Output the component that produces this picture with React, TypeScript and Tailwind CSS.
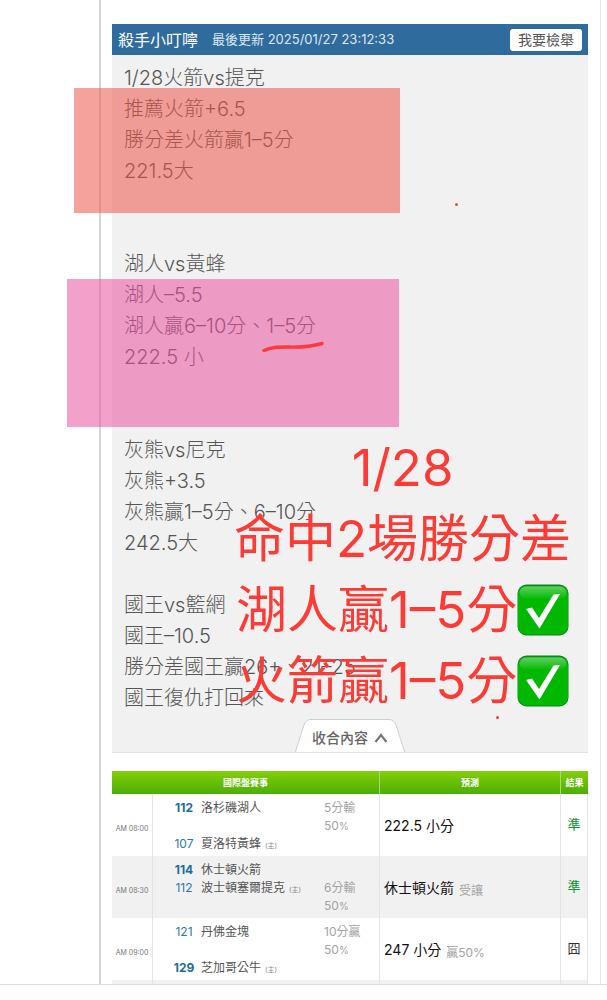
interface Team {
  number: string;
  name: string;
  home?: boolean;
  favored?: boolean;
}

interface Game {
  time: string;
  away: Team;
  host: Team;
  spread: string;
  // 讓分標示在客隊或主隊那一列
  spreadRow: 'away' | 'host';
  pick: string;
  pickNote?: string;
  result: string;
  hit: boolean;
}

const NOTE_LINES = [
  '1/28火箭vs提克',
  '推薦火箭+6.5',
  '勝分差火箭贏1–5分',
  '221.5大',
  '',
  '',
  '湖人vs黃蜂',
  '湖人–5.5',
  '湖人贏6–10分、1–5分',
  '222.5 小',
  '',
  '',
  '灰熊vs尼克',
  '灰熊+3.5',
  '灰熊贏1–5分、6–10分',
  '242.5大',
  '',
  '國王vs籃網',
  '國王–10.5',
  '勝分差國王贏26+、21–25',
  '國王復仇打回來',
];

const GAMES: Game[] = [
  {
    time: 'AM 08:00',
    away: { number: '112', name: '洛杉磯湖人', favored: true },
    host: { number: '107', name: '夏洛特黃蜂', home: true },
    spread: '5分輸',
    spreadRow: 'away',
    pick: '222.5 小分',
    result: '準',
    hit: true,
  },
  {
    time: 'AM 08:30',
    away: { number: '114', name: '休士頓火箭', favored: true },
    host: { number: '112', name: '波士頓塞爾提克', home: true },
    spread: '6分輸',
    spreadRow: 'host',
    pick: '休士頓火箭',
    pickNote: '受讓',
    result: '準',
    hit: true,
  },
  {
    time: 'AM 09:00',
    away: { number: '121', name: '丹佛金塊' },
    host: { number: '129', name: '芝加哥公牛', home: true, favored: true },
    spread: '10分贏',
    spreadRow: 'away',
    pick: '247 小分',
    pickNote: '贏50%',
    result: '囧',
    hit: false,
  },
];

function CheckMark() {
  return (
    <svg viewBox="0 0 52 52" className="h-[52px] w-[52px] shrink-0" role="img" aria-label="命中">
      <defs>
        <linearGradient id="check-shine" x1="0" y1="0" x2="0" y2="1">
          <stop offset="0" stopColor="#5fd05f" />
          <stop offset="1" stopColor="#00b800" />
        </linearGradient>
      </defs>
      <rect x="0.5" y="0.5" width="51" height="51" rx="9" fill="#078a18" />
      <rect x="1" y="2" width="50" height="48.5" rx="8.5" fill="#00b800" />
      <rect x="2.5" y="2.5" width="47" height="13" rx="6.5" fill="url(#check-shine)" />
      <path d="M9 25 L15 23.5 L22 34 L36.5 10.5 L43 10 L22.5 44.5 Z" fill="#fff" />
    </svg>
  );
}

function Spread({ text }: { text: string }) {
  return (
    <div className="w-[55px] text-[#a3a3a3]">
      {text}
      <br />
      50<span className="text-[10px]">%</span>
    </div>
  );
}

function TeamRow({ team }: { team: Team }) {
  return (
    <div className="flex">
      <span
        className={`w-6 text-center ${team.favored ? 'font-bold text-[#1d6c9f]' : 'text-[#2b78a8]'}`}
      >
        {team.number}
      </span>
      <span className="ml-[5px]">
        {team.name}
        {team.home && <span className="ml-1 text-[7px] text-[#888]">(主)</span>}
      </span>
    </div>
  );
}

function GameRow({ game, shaded }: { game: Game; shaded: boolean }) {
  return (
    <tr className={`h-[62px] ${shaded ? 'bg-[#f1f1f1]' : 'bg-white'}`}>
      <td className="border-r border-[#e4e4e4] p-0 pt-2 text-center text-[7px] whitespace-nowrap text-[#777]">
        {game.time}
      </td>
      <td className="border-r border-[#e4e4e4] p-0 align-top">
        <div className="flex justify-between pt-[5px] pl-[19px] text-[12px] leading-[18px] text-[#555]">
          <div>
            <TeamRow team={game.away} />
            {game.spreadRow === 'away' && <div className="h-[18px]" />}
            <TeamRow team={game.host} />
          </div>
          <div className={game.spreadRow === 'host' ? 'pt-[18px]' : ''}>
            <Spread text={game.spread} />
          </div>
        </div>
      </td>
      <td className="border-r border-[#e4e4e4] px-1 text-[14px] text-[#111]">
        {game.pick}
        {game.pickNote && (
          <span className="relative top-0.5 ml-[5px] text-[12px] text-[#a3a3a3]">
            {game.pickNote}
          </span>
        )}
      </td>
      <td
        className={`border-r border-[#e4e4e4] p-0 text-center text-[13px] ${game.hit ? 'text-[#0b9430]' : 'text-[#333]'}`}
      >
        {game.result}
      </td>
    </tr>
  );
}

function GamesTable() {
  return (
    <table className="mt-[18px] w-full table-fixed border-separate border-spacing-0">
      <colgroup>
        <col className="w-[41px]" />
        <col className="w-[227px]" />
        <col />
        <col className="w-[27px]" />
      </colgroup>
      <thead>
        <tr className="h-[23px] bg-linear-to-b from-[#83cf0a] to-[#4bae04] text-[9px] text-white">
          <th colSpan={2} className="border-r border-[#a5d978] p-0 font-bold">
            國際盤賽事
          </th>
          <th className="border-r border-[#a5d978] p-0 font-bold">預測</th>
          <th className="p-0 font-bold">結果</th>
        </tr>
      </thead>
      <tbody>
        {GAMES.map((game, i) => (
          <GameRow key={game.time} game={game} shaded={i % 2 === 1} />
        ))}
        <tr className="h-[62px] bg-[#f1f1f1]">
          <td className="border-r border-[#e4e4e4]" />
          <td className="border-r border-[#e4e4e4]" />
          <td className="border-r border-[#e4e4e4]" />
          <td className="border-r border-[#e4e4e4]" />
        </tr>
      </tbody>
    </table>
  );
}

// 手繪標記：色塊、底線、大字，都疊在內容上面
function Annotations() {
  return (
    <div className="pointer-events-none absolute inset-0">
      <div className="absolute top-[88px] left-[74px] h-[125px] w-[326px] bg-[#eb5649]/55" />
      <div className="absolute top-[279px] left-[67px] h-[148px] w-[332px] bg-[#e952a0]/55" />
      <svg viewBox="0 0 64 12" className="absolute top-[341px] left-[261px] h-3 w-16" fill="none">
        <path
          d="M3 9.5 C10 6 17 6 27 6 C40 6.5 49 6 61 2.5"
          stroke="#fb3a3c"
          strokeWidth="3.4"
          strokeLinecap="round"
        />
      </svg>
      <span className="absolute top-[203px] left-[455px] size-[3px] rounded-full bg-[#e5484d]" />
      <span className="absolute top-[716px] left-[496px] size-[3px] rounded-full bg-[#fb3a3c]" />
      <div className="absolute top-[432px] left-[234px] flex flex-col items-center text-[51px] leading-[71px] whitespace-nowrap text-[#fb3b35]">
        <p>1/28</p>
        <p>命中2場勝分差</p>
        <p className="flex items-center">
          湖人贏1–5分
          <CheckMark />
        </p>
        <p className="flex items-center">
          火箭贏1–5分
          <CheckMark />
        </p>
      </div>
    </div>
  );
}

export default function App() {
  return (
    <div className="flex h-screen flex-col bg-white font-['Inter','Noto_Sans_CJK_TC',sans-serif]">
      <div className="relative min-h-0 flex-1 overflow-hidden">
        <main className="mr-1.5 ml-[99px] h-full border-r border-l-2 border-r-[#e8e8e8] border-l-[#d4d4d4] pt-6 pr-3 pl-[11px]">
          <section className="border-b border-[#e2e2e2] bg-[#f1f1f1]">
            <header className="flex h-[31px] items-center bg-[#306b9e] px-1.5 text-white">
              <h1 className="text-[16px]">殺手小叮嚀</h1>
              <span className="ml-3.5 text-[13px] text-[#dce8f2]">最後更新 2025/01/27 23:12:33</span>
              <button
                type="button"
                className="ml-auto h-[22px] rounded-[3px] bg-white px-2 text-[14px] leading-[22px] text-[#555]"
              >
                我要檢舉
              </button>
            </header>
            <div className="px-3 pt-2 text-[20px] leading-[31px] text-[#555]">
              {NOTE_LINES.map((line, i) => (
                <p key={i} className="h-[31px] font-light whitespace-nowrap">
                  {line}
                </p>
              ))}
            </div>
            <div className="mt-[5px] flex justify-center">
              <button type="button" className="relative h-[33px] w-[110px] text-[14px] text-[#666]">
                <svg viewBox="0 0 110 33" className="absolute inset-0 h-full w-full" fill="none">
                  <path
                    d="M0 34 L9 6 Q11 0.5 16 0.5 H94 Q99 0.5 101 6 L110 34"
                    fill="#fff"
                    stroke="#cfcfcf"
                  />
                </svg>
                <span className="relative flex items-center justify-center gap-1.5 pt-1 font-medium">
                  收合內容
                  <svg viewBox="0 0 14 10" className="h-2.5 w-3.5" fill="none">
                    <path d="M1.5 9 L7 2 L12.5 9" stroke="#777" strokeWidth="2.2" />
                  </svg>
                </span>
              </button>
            </div>
          </section>
          <GamesTable />
        </main>
        <Annotations />
      </div>
      <footer className="h-4 border-t border-[#dcdcdc] bg-[#fdfdfd]" />
    </div>
  );
}
